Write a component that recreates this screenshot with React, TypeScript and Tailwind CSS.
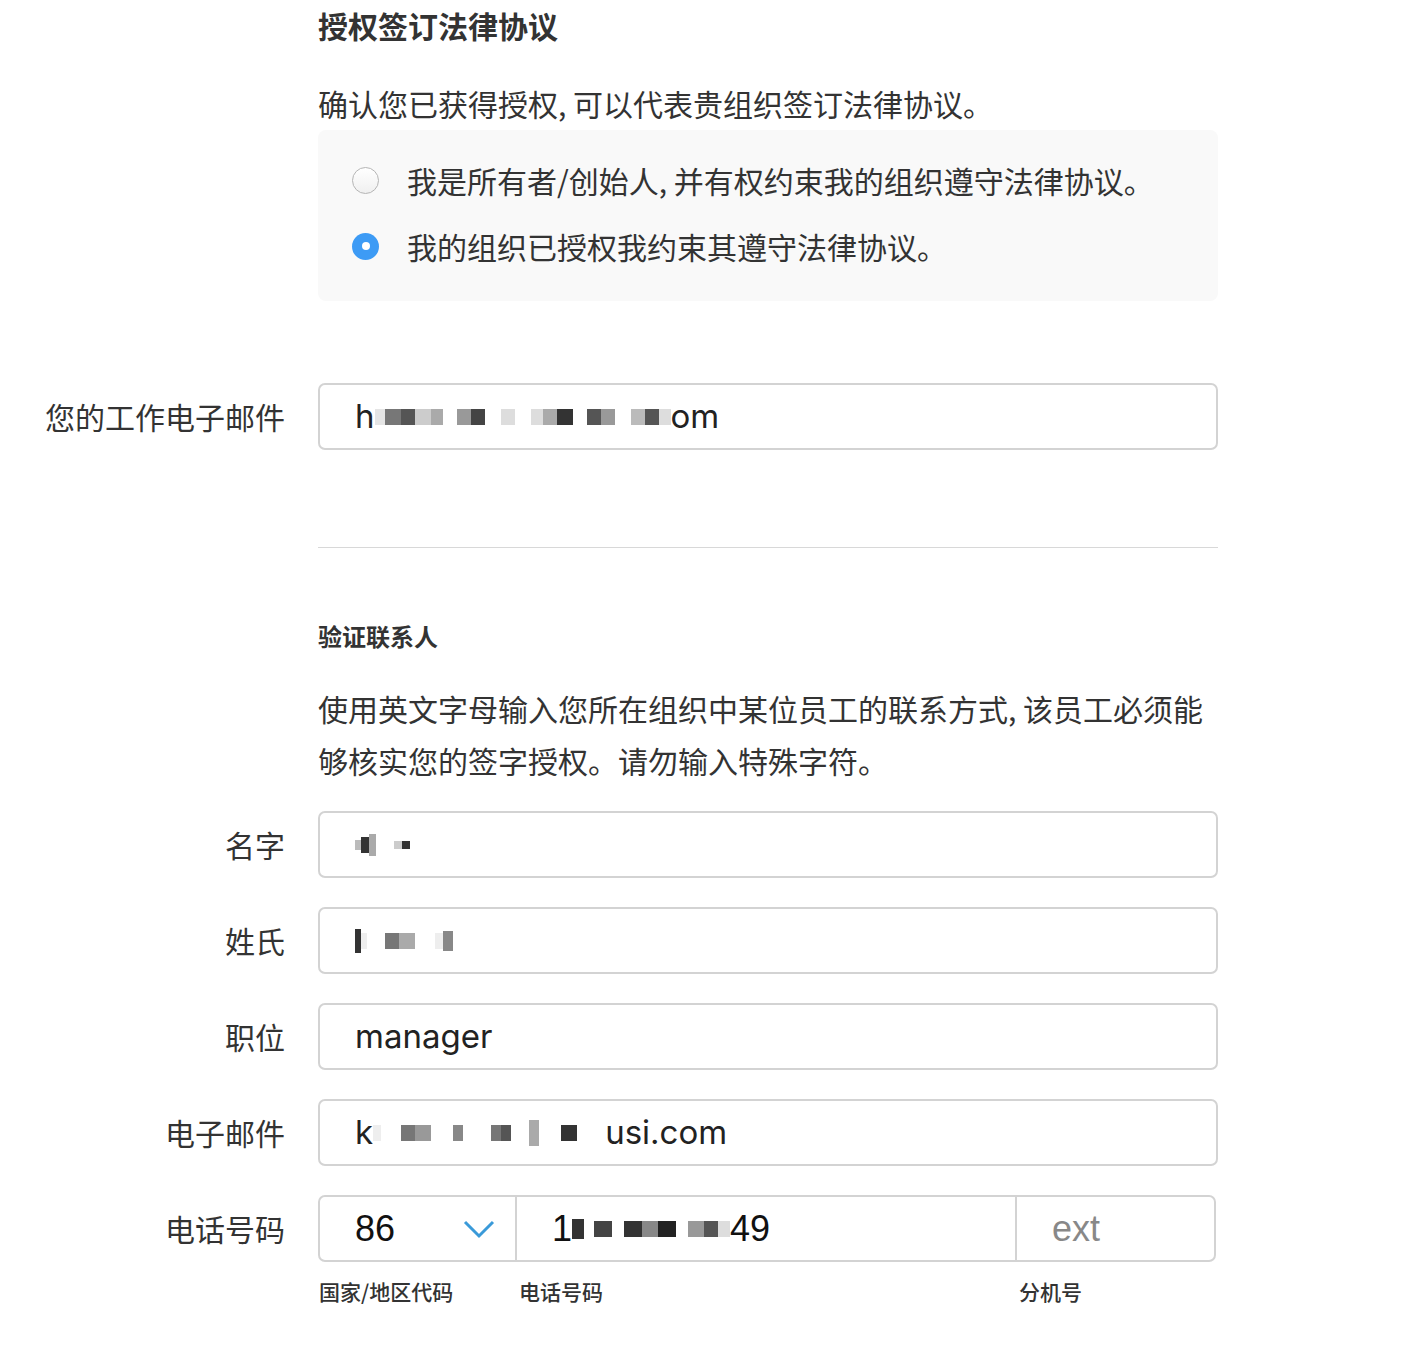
import React from "react";

const cjk = "font-['PingFang_SC','Noto_Sans_CJK_SC',sans-serif]";
const latin = "font-['Inter','Noto_Sans_CJK_SC',sans-serif]";

// pixelated redaction blocks: [width, shade, height?]
function Blur({ cells }: { cells: [number, string, number?][] }) {
  return (
    <span className="inline-flex items-center align-middle">
      {cells.map(([w, c, h], i) => (
        <span key={i} className="inline-block" style={{ width: w, height: h ?? 16, background: c }} />
      ))}
    </span>
  );
}

function Field({ label, children }: { label: string; children: React.ReactNode }) {
  return (
    <div className="flex items-center">
      <div className={`w-[285px] text-right text-[30px] text-[#333] ${cjk}`}>{label}</div>
      <div className="ml-[33px] w-[900px] h-[67px] border-2 border-[#d3d3d3] rounded-[7px] flex items-center px-[35px] text-[33px] text-[#222] overflow-hidden">
        {children}
      </div>
    </div>
  );
}

function Radio({ checked, text }: { checked?: boolean; text: string }) {
  return (
    <div className="flex items-center h-[40px]">
      {checked ? (
        <span className="w-[27px] h-[27px] rounded-full bg-[#3d9bf5] flex items-center justify-center ml-[34px]">
          <span className="w-[8px] h-[8px] rounded-full bg-white" />
        </span>
      ) : (
        <span className="w-[27px] h-[27px] rounded-full border border-[#b5b5b5] bg-gradient-to-b from-white to-[#f0f0f0] ml-[34px]" />
      )}
      <span className={`ml-[28px] text-[30px] text-[#333] ${cjk}`}>{text}</span>
    </div>
  );
}

export default function App() {
  return (
    <div className="w-[1420px] h-[1352px] bg-white">
      <div className="pl-[318px] w-[1218px]">
        <h2 className={`pt-[5px] text-[30px] leading-[40px] font-bold text-[#333] ${cjk}`}>授权签订法律协议</h2>
        <p className={`mt-[38px] text-[30px] leading-[40px] text-[#333] ${cjk}`}>确认您已获得授权, 可以代表贵组织签订法律协议。</p>
        <div className="mt-[7px] bg-[#f9f9f9] rounded-[8px] pt-[30px] pb-[35px] flex flex-col gap-[26px]">
          <Radio text="我是所有者/创始人, 并有权约束我的组织遵守法律协议。" />
          <Radio checked text="我的组织已授权我约束其遵守法律协议。" />
        </div>
      </div>

      <div className="mt-[82px]">
        <Field label="您的工作电子邮件">
          <span className={latin}>h</span>
          <Blur cells={[[10, "#e5e5e5"], [16, "#777"], [14, "#555"], [16, "#ccc"], [12, "#aaa"], [14, "#fff"], [14, "#999"], [14, "#444"], [16, "#fff"], [14, "#ddd"], [16, "#fff"], [12, "#ddd"], [14, "#aaa"], [16, "#333"], [14, "#fff"], [14, "#555"], [14, "#999"], [16, "#fff"], [14, "#bbb"], [14, "#555"], [12, "#ddd"]]} />
          <span className={latin}>om</span>
        </Field>
      </div>

      <div className="ml-[318px] w-[900px] mt-[97px] border-t border-[#d8d8d8]" />

      <div className="pl-[318px] w-[1218px]">
        <h3 className={`mt-[73px] text-[24px] leading-[30px] font-bold text-[#333] ${cjk}`}>验证联系人</h3>
        <p className={`mt-[31px] text-[30px] leading-[52px] text-[#333] ${cjk}`}>
          使用英文字母输入您所在组织中某位员工的联系方式, 该员工必须能
          <br />
          够核实您的签字授权。请勿输入特殊字符。
        </p>
      </div>

      <div className="mt-[25px] flex flex-col gap-[29px]">
        <Field label="名字">
          <Blur cells={[[6, "#bbb", 10], [8, "#333"], [7, "#aaa", 22], [18, "#fff"], [8, "#ccc", 8], [8, "#333", 8]]} />
        </Field>
        <Field label="姓氏">
          <Blur cells={[[6, "#333", 24], [6, "#eee"], [18, "#fff"], [14, "#777"], [16, "#aaa"], [20, "#fff"], [8, "#eee"], [10, "#888", 20]]} />
        </Field>
        <Field label="职位">
          <span className={latin}>manager</span>
        </Field>
        <Field label="电子邮件">
          <span className={latin}>k</span>
          <Blur cells={[[8, "#eee"], [20, "#fff"], [14, "#777"], [16, "#999"], [22, "#fff"], [10, "#888"], [28, "#fff"], [10, "#777"], [10, "#555"], [18, "#fff"], [10, "#aaa", 26], [22, "#fff"], [16, "#333"], [28, "#fff"]]} />
          <span className={latin}>usi.com</span>
        </Field>

        <div className="flex items-center">
          <div className={`w-[285px] text-right text-[30px] text-[#333] ${cjk}`}>电话号码</div>
          <div className="ml-[33px] w-[898px] h-[67px] border-2 border-[#d3d3d3] rounded-[7px] flex text-[36px] font-['Liberation_Sans',sans-serif] overflow-hidden">
            <div className="w-[197px] flex items-center justify-between pl-[35px] pr-[20px] border-r-2 border-[#d3d3d3] text-[#111]">
              <span>86</span>
              <svg width="32" height="20" viewBox="0 0 32 20" fill="none">
                <path d="M2 3 L16 17 L30 3" stroke="#3a9ad9" strokeWidth="3" />
              </svg>
            </div>
            <div className="w-[500px] flex items-center pl-[35px] border-r-2 border-[#d3d3d3] text-[#111]">
              <span>1</span>
              <Blur cells={[[12, "#333", 20], [10, "#fff"], [18, "#444"], [12, "#fff"], [18, "#333"], [16, "#888"], [18, "#222"], [12, "#fff"], [16, "#999"], [14, "#555"], [12, "#ddd"]]} />
              <span>49</span>
            </div>
            <div className="flex-1 flex items-center pl-[35px] text-[#888]">ext</div>
          </div>
        </div>
      </div>

      <div className={`ml-[319px] mt-[15px] flex text-[21px] leading-[28px] font-medium text-[#333] ${cjk}`}>
        <span className="w-[200px]">国家/地区代码</span>
        <span className="w-[500px]">电话号码</span>
        <span>分机号</span>
      </div>
    </div>
  );
}
